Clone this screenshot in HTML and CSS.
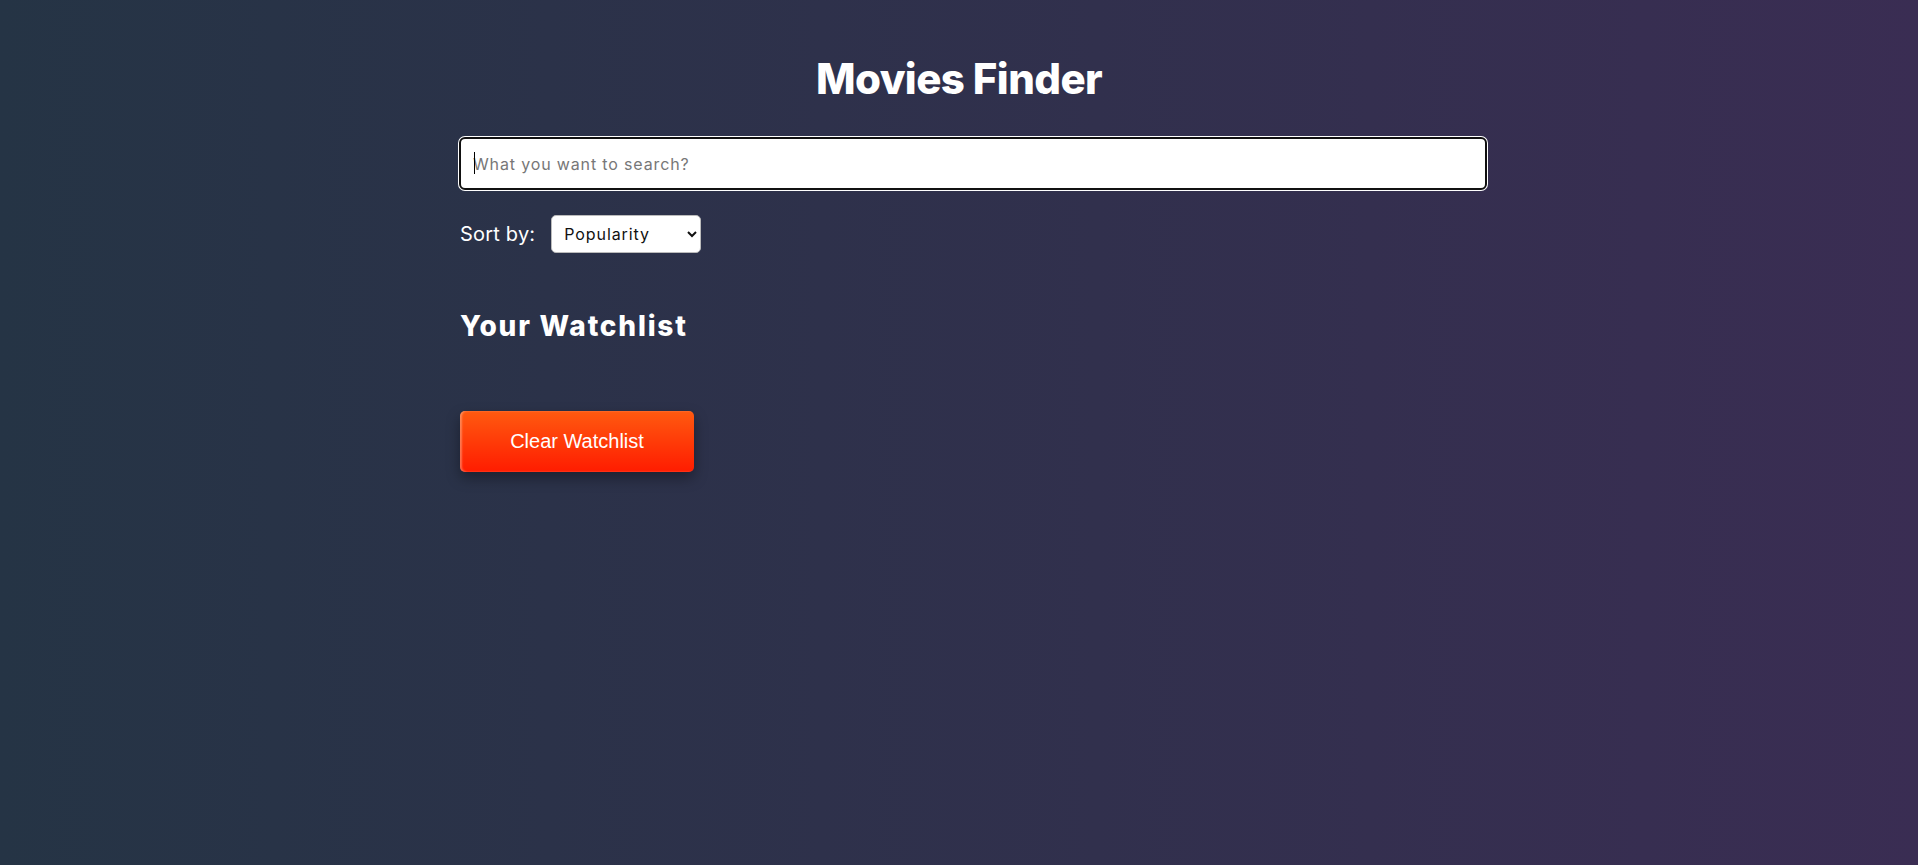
FILE: index.html
```html
<!DOCTYPE html>
<html lang="en">
<head>
<meta charset="utf-8">
<title>Movies Finder</title>
<link rel="stylesheet" href="styles.css">
</head>
<body>
<main class="container">
  <h1 class="title">Movies Finder</h1>
  <div class="search-wrap">
    <input class="search" type="text" placeholder="What you want to search?">
    <span class="caret"></span>
  </div>
  <div class="sort-row">
    <label class="sort-label" for="sort">Sort by:</label>
    <select id="sort" class="sort-select">
      <option>Popularity</option>
      <option>Rating</option>
      <option>Release date</option>
    </select>
  </div>
  <h2 class="watch-title">Your Watchlist</h2>
  <div class="watchlist"></div>
  <button class="clear-btn" type="button">Clear Watchlist</button>
</main>
</body>
</html>
```
FILE: styles.css
```css
html, body {
  margin: 0;
  padding: 0;
  height: 100%;
}
body {
  background: linear-gradient(to right, #253445, #3a2d53);
  font-family: Inter, "Noto Sans", sans-serif;
  color: #fff;
  min-height: 865px;
}
.container {
  width: 1000px;
  margin: 0 auto;
  padding-top: 54px;
  display: flex;
  flex-direction: column;
  align-items: flex-start;
}
.title {
  align-self: center;
  margin: 0;
  font-size: 42px;
  line-height: 50px;
  font-weight: 800;
  letter-spacing: -0.6px;
}
.search-wrap {
  position: relative;
  margin-top: 33px;
}
.search {
  width: 1000px;
  height: 49px;
  padding: 0 12px;
  border: 2px solid #111;
  border-radius: 6px;
  box-shadow: 0 0 0 1px #fff;
  font-family: inherit;
  font-size: 16px;
  letter-spacing: 0.85px;
  color: #222;
  background: #fff;
  outline: none;
  display: block;
}
.search::placeholder {
  color: #777;
}
.caret {
  position: absolute;
  left: 15px;
  top: 15px;
  width: 1px;
  height: 22px;
  background: #000;
}
.sort-row {
  display: flex;
  align-items: center;
  gap: 16px;
  margin-top: 25px;
  padding-left: 1px;
}
.sort-label {
  font-size: 20px;
  letter-spacing: 0.2px;
}
.sort-select {
  width: 150px;
  height: 38px;
  padding: 0 8px;
  border: 1px solid #bbb;
  border-radius: 5px;
  background: #fff;
  color: #111;
  font-family: inherit;
  font-size: 16px;
  letter-spacing: 0.9px;
}
.watch-title {
  margin: 56px 0 0 1px;
  font-size: 28px;
  line-height: 34px;
  font-weight: 800;
  letter-spacing: 1.8px;
}
.watchlist {
  height: 68px;
}
.clear-btn {
  margin-left: 1px;
  width: 234px;
  height: 61px;
  border: none;
  border-radius: 5px;
  background: linear-gradient(to bottom, #ff5a10, #ff1c00);
  box-shadow: inset 2px 0 2px rgba(255, 200, 170, 0.45), 0 6px 14px rgba(0, 0, 0, 0.35);
  color: #fff;
  font-family: "Liberation Sans", Arial, sans-serif;
  font-size: 20px;
  cursor: pointer;
}
```
